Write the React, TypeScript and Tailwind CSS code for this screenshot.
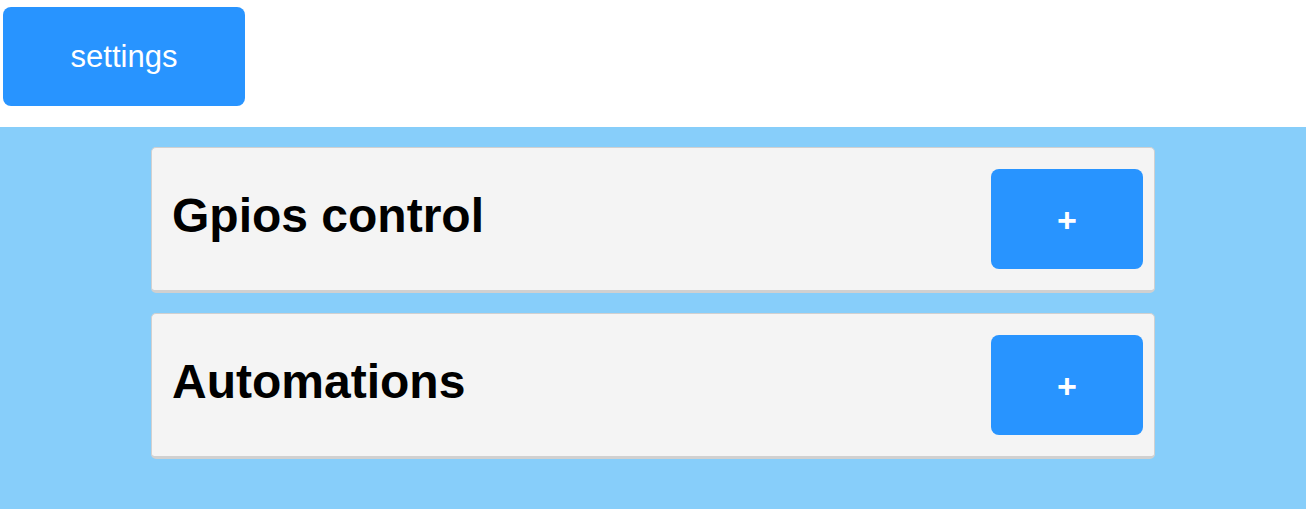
import React from "react";

const sections = ["Gpios control", "Automations"];

const SectionCard = ({ title }: { title: string }) => {
  return (
    <div className="flex justify-between items-start bg-[#f4f4f4] border border-[#d0d0d0] border-b-[3px] rounded-[5px] pl-5 pr-[11px] pt-[21px] pb-[21px]">
      <h1 className="mt-[19px] text-[48px] leading-[55px] font-bold text-black">{title}</h1>
      <button className="w-[152px] h-[100px] rounded-lg bg-[#2894ff] text-white text-[34px] font-bold pt-[3px] flex items-center justify-center">
        +
      </button>
    </div>
  );
};

export default function App() {
  return (
    <div className="min-h-[509px] flex flex-col bg-white font-['Liberation_Sans',Arial,sans-serif]">
      <div className="h-[127px] pt-[7px] pl-[3px]">
        <button className="w-[242px] h-[99px] rounded-lg bg-[#2894ff] text-white text-[31px] pt-[2px] flex items-center justify-center">
          settings
        </button>
      </div>
      <div className="flex-1 bg-[#87cefa] pt-5 pb-[50px]">
        <div className="w-[1004px] mx-auto flex flex-col gap-5">
          {sections.map((s) => (
            <SectionCard key={s} title={s} />
          ))}
        </div>
      </div>
    </div>
  );
}
